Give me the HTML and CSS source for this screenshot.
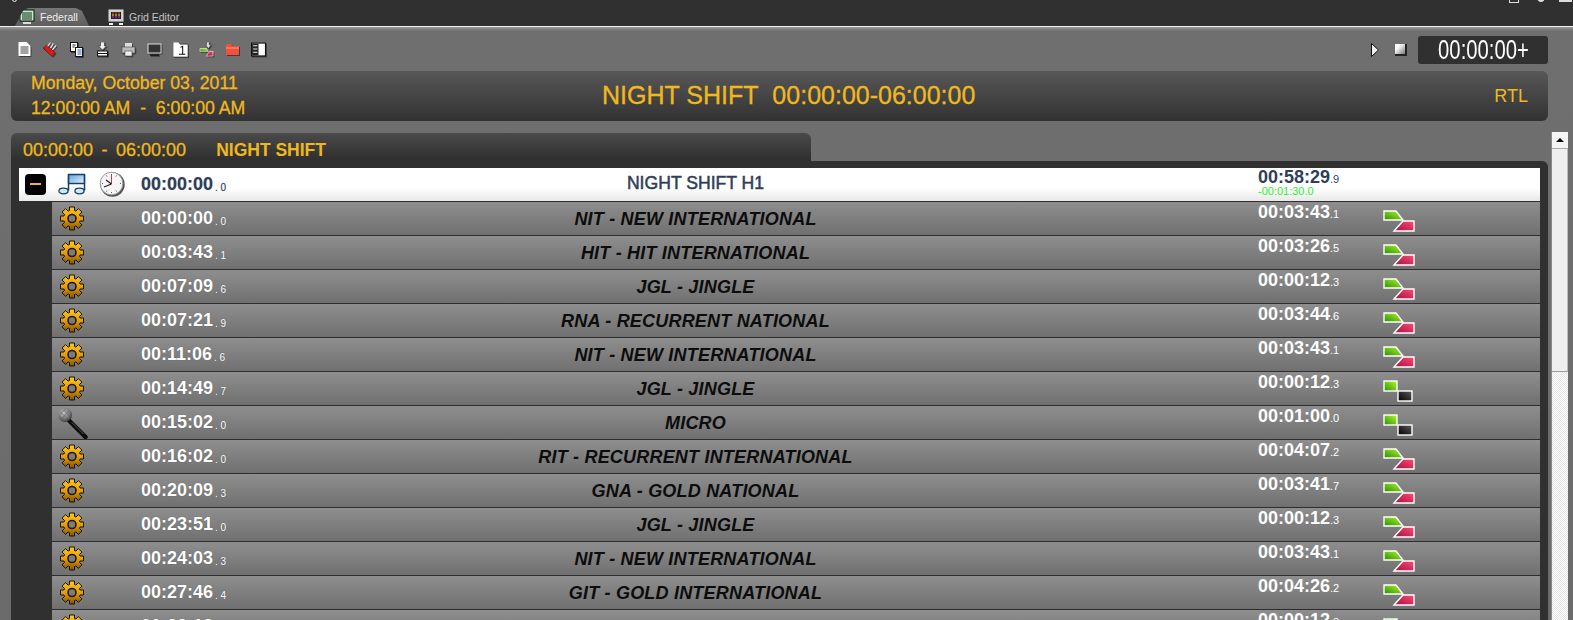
FILE: index.html
```html
<!DOCTYPE html>
<html lang="en">
<head>
  <meta charset="UTF-8" />
  <title>Federall</title>
  <link rel="stylesheet" href="styles.css">
</head>
<body>

  <svg class="defs" width="0" height="0" aria-hidden="true">
    <defs>
      <linearGradient id="gold" x1="0" y1="0" x2="0" y2="1">
        <stop offset="0" stop-color="#ffc71e"/>
        <stop offset="0.55" stop-color="#e39a08"/>
        <stop offset="1" stop-color="#7d5200"/>
      </linearGradient>
      <linearGradient id="green" x1="0" y1="1" x2="1" y2="0">
        <stop offset="0" stop-color="#2f8a0c"/>
        <stop offset="1" stop-color="#b0ff24"/>
      </linearGradient>
      <linearGradient id="red" x1="0" y1="1" x2="1" y2="0">
        <stop offset="0" stop-color="#a50e3c"/>
        <stop offset="1" stop-color="#ff4a78"/>
      </linearGradient>
      <linearGradient id="black" x1="0" y1="1" x2="1" y2="0">
        <stop offset="0" stop-color="#000"/>
        <stop offset="1" stop-color="#5a5a5a"/>
      </linearGradient>
      <linearGradient id="note" x1="0" y1="0" x2="1" y2="1">
        <stop offset="0" stop-color="#5ea4d8"/>
        <stop offset="1" stop-color="#e8f4fc"/>
      </linearGradient>
      <radialGradient id="mic-head" cx="0.4" cy="0.35" r="0.7">
        <stop offset="0" stop-color="#c8c8c8"/>
        <stop offset="0.6" stop-color="#7c7c7c"/>
        <stop offset="1" stop-color="#2e2e2e"/>
      </radialGradient>
      <symbol id="gear" viewBox="0 0 24 24">
        <path d="M9.5 4V.5h5V4L15.9 4.6 18.4 2.100 21.900 5.600 19.400 8.100 20 9.500h3.500v5H20L19.400 15.900 21.900 18.400 18.400 21.900 15.900 19.400 14.500 20v3.500h-5V20L8.100 19.400 5.600 21.900 2.100 18.400 4.600 15.900 4 14.500H.5v-5H4L4.600 8.100 2.100 5.600 5.600 2.100 8.100 4.600z" fill="url(#gold)" stroke="#1c1400" stroke-width="1"/>
        <circle cx="12" cy="12" r="4" fill="#7c7c7c" stroke="#241800" stroke-width="1.600"/>
      </symbol>
      <symbol id="flag-red" viewBox="0 0 32 22">
        <path d="M1 1h12l7 9H1z" fill="url(#green)" stroke="#fff" stroke-width="1.400"/>
        <path d="M11 21l9-10h11v10z" fill="url(#red)" stroke="#fff" stroke-width="1.400"/>
      </symbol>
      <symbol id="flag-black" viewBox="0 0 32 22">
        <rect x="1" y="1" width="13" height="10" fill="url(#green)" stroke="#fff" stroke-width="1.400"/>
        <rect x="15" y="11" width="14" height="10" fill="url(#black)" stroke="#fff" stroke-width="1.400"/>
      </symbol>
    </defs>
  </svg>

  <!-- Barra de pestanas -->
  <header class="top-bar">
    <span class="app-mark"></span>
    <div class="tab tab-active">
      <svg class="tab-icon" viewBox="0 0 16 16"><rect x="1" y="1" width="14" height="11" fill="#b6f0c4" stroke="#111"/><path d="M3 4h10M3 6h10M3 8h10M3 10h10" stroke="#222"/><path d="M4 14h8" stroke="#ddd" stroke-width="2"/></svg>
      <span>Federall</span>
    </div>
    <div class="tab">
      <svg class="tab-icon" viewBox="0 0 16 16"><rect x="1" y="1" width="14" height="11" fill="#ccc" stroke="#ddd"/><rect x="3" y="3" width="10" height="7" fill="#222"/><path d="M4 4h2M7 4h2M10 4h2" stroke="#e33"/><path d="M4 6h2M7 6h2M10 6h2" stroke="#ee3"/><path d="M4 8h2M7 8h2M10 8h2" stroke="#c3e"/><path d="M1 15h4M11 15h4" stroke="#eee" stroke-width="2"/></svg>
      <span>Grid Editor</span>
    </div>
    <div class="win-controls">
      <span class="win-box"></span>
      <span class="win-drop"></span>
      <span class="win-line"></span>
    </div>
  </header>

  <main class="workspace">

    <div class="toolbar">
      <div class="tools">
        <svg viewBox="0 0 14 15"><path d="M1 0h8l4 4v10H1z" fill="#fff"/><path d="M3 5h8M3 7h8M3 9h8M3 11h8" stroke="#444"/></svg>
        <svg viewBox="0 0 16 15"><path d="M0 6l4-3 9 8-3 4z" fill="#e01818" stroke="#400" stroke-width=".5"/><path d="M5 4l3-4M8 6l3-5M10 8l4-5" stroke="#eee" stroke-width="1.200"/></svg>
        <svg viewBox="0 0 14 15"><rect x="1" y="0.500" width="7" height="9" fill="#fff" stroke="#111"/><rect x="6" y="5.500" width="7" height="9" fill="#fff" stroke="#111"/><path d="M8 8h4M8 10h4M8 12h4" stroke="#35c"/><path d="M3 3h3M3 5h2" stroke="#111"/></svg>
        <svg viewBox="0 0 12 15"><path d="M4 0h4v4h2l-4 4-4-4h2z" fill="#eee" stroke="#222" stroke-width=".5"/><rect x="1" y="9" width="10" height="5" fill="#fff" stroke="#111"/><path d="M1 11.500h10" stroke="#111"/></svg>
        <svg viewBox="0 0 15 15"><rect x="4" y="1" width="7" height="4" fill="#ddd"/><rect x="1" y="5" width="13" height="6" fill="#bbb" stroke="#444" stroke-width=".6"/><rect x="4" y="9" width="7" height="5" fill="#eee" stroke="#444" stroke-width=".6"/></svg>
        <svg viewBox="0 0 15 13"><rect x="1" y="1" width="13" height="9" fill="#333" stroke="#ddd"/><path d="M3 12h9" stroke="#111" stroke-width="1.500"/></svg>
        <svg viewBox="0 0 14 14"><path d="M0 0h5l2 2h7v12H0z" fill="#fff" stroke="#111" stroke-width=".5"/><path d="M7 5l2-1v7M5.500 11.500h6" stroke="#111" fill="none"/></svg>
        <svg viewBox="0 0 16 16"><path d="M8 0h3v3h2l-3 4-3-4h1z" fill="#ddd" stroke="#222" stroke-width=".5"/><path d="M1 7h7l2 3H1z" fill="url(#green)" stroke="#fff" stroke-width=".6"/><path d="M8 15l3-5h4v5z" fill="url(#red)" stroke="#fff" stroke-width=".6"/></svg>
        <svg viewBox="0 0 15 13"><path d="M1 1h5l1 2h7v9H1z" fill="#f0503c"/><path d="M1 5h13" stroke="#ff9a80"/></svg>
        <svg viewBox="0 0 14 13"><rect x="0.500" y="0.500" width="13" height="12" fill="#fff" stroke="#111"/><rect x="1" y="1" width="6" height="11" fill="#222"/><path d="M2 3h4M2 6h4M2 9h4" stroke="#eee"/></svg>
      </div>
      <div class="transport">
        <svg class="play" viewBox="0 0 8 14"><path d="M.5.500L7.500 7 .5 13.500z" fill="#eee" stroke="#111"/></svg>
        <span class="stop"></span>
        <div class="counter"><span>00:00:00+</span></div>
      </div>
    </div>

    <section class="day-panel">
      <div class="day-date">
        <div>Monday, October 03, 2011</div>
        <div>12:00:00 AM &nbsp;-&nbsp; 6:00:00 AM</div>
      </div>
      <div class="day-title">NIGHT SHIFT&nbsp; 00:00:00-06:00:00</div>
      <div class="day-station">RTL</div>
    </section>

    <div class="log-wrap">
      <section class="log">
        <div class="shift-tab">
          <span class="shift-time">00:00:00 - 06:00:00</span>
          <span class="shift-name">NIGHT SHIFT</span>
        </div>
        <div class="shift-frame">

          <div class="row row-hour">
            <div class="cell-icons">
              <span class="collapse"></span>
              <svg class="note" viewBox="0 0 28 22"><path d="M10.500 1.500h16v9h-16z" fill="url(#note)" stroke="#14406c" stroke-width="1.300"/><path d="M10.500 1.500v16M26.500 1.500v16" stroke="#14406c" stroke-width="1.500"/><ellipse cx="5.500" cy="18" rx="4.600" ry="2.800" fill="#cfe6f5" stroke="#14406c" stroke-width="1.300"/><ellipse cx="21.500" cy="18" rx="4.600" ry="2.800" fill="#cfe6f5" stroke="#14406c" stroke-width="1.300"/></svg>
              <svg class="clock" viewBox="0 0 26 26"><circle cx="13.500" cy="13.500" r="12.200" fill="#555"/><circle cx="12.500" cy="12.500" r="11.300" fill="#f6f6f6" stroke="#999"/><path d="M12.500 13V4" stroke="#d33" stroke-width="1"/><path d="M12.500 13L5 16M12.500 13L7 9" stroke="#222" stroke-width="1.300"/><path d="M12.500 3v1M12.500 21v1M3 12.500h1M21 12.500h1M7.500 4.500l.5 1M17.500 4.500l-.5 1M7.500 20.500l.5-1M17.500 20.500l-.5-1" stroke="#555"/></svg>
            </div>
            <div class="cell-start">00:00:00<small>. 0</small></div>
            <div class="cell-name">NIGHT SHIFT H1</div>
            <div class="cell-length">00:58:29<small>.9</small><em>-00:01:30.0</em></div>
          </div>

          <div class="row"><div class="cell-icons"><svg class="gear"><use href="#gear"/></svg></div><div class="cell-start">00:00:00<small>. 0</small></div><div class="cell-name">NIT - NEW INTERNATIONAL</div><div class="cell-length">00:03:43<small>.1</small></div><svg class="flag"><use href="#flag-red"/></svg></div>
          <div class="row"><div class="cell-icons"><svg class="gear"><use href="#gear"/></svg></div><div class="cell-start">00:03:43<small>. 1</small></div><div class="cell-name">HIT - HIT INTERNATIONAL</div><div class="cell-length">00:03:26<small>.5</small></div><svg class="flag"><use href="#flag-red"/></svg></div>
          <div class="row"><div class="cell-icons"><svg class="gear"><use href="#gear"/></svg></div><div class="cell-start">00:07:09<small>. 6</small></div><div class="cell-name">JGL - JINGLE</div><div class="cell-length">00:00:12<small>.3</small></div><svg class="flag"><use href="#flag-red"/></svg></div>
          <div class="row"><div class="cell-icons"><svg class="gear"><use href="#gear"/></svg></div><div class="cell-start">00:07:21<small>. 9</small></div><div class="cell-name">RNA - RECURRENT NATIONAL</div><div class="cell-length">00:03:44<small>.6</small></div><svg class="flag"><use href="#flag-red"/></svg></div>
          <div class="row"><div class="cell-icons"><svg class="gear"><use href="#gear"/></svg></div><div class="cell-start">00:11:06<small>. 6</small></div><div class="cell-name">NIT - NEW INTERNATIONAL</div><div class="cell-length">00:03:43<small>.1</small></div><svg class="flag"><use href="#flag-red"/></svg></div>
          <div class="row"><div class="cell-icons"><svg class="gear"><use href="#gear"/></svg></div><div class="cell-start">00:14:49<small>. 7</small></div><div class="cell-name">JGL - JINGLE</div><div class="cell-length">00:00:12<small>.3</small></div><svg class="flag"><use href="#flag-black"/></svg></div>
          <div class="row"><div class="cell-icons"><svg class="mic" viewBox="0 0 32 32"><path d="M12 13L29 30" stroke="#0c0c0c" stroke-width="4.500" stroke-linecap="round"/><path d="M15 15L27 27" stroke="#555" stroke-width="1"/><circle cx="8.500" cy="8" r="7" fill="url(#mic-head)"/><path d="M4 5l8 8M7 3l7 7M3 9l6 5M5 12l7-8M3 8l6-6" stroke="#555" stroke-width=".6"/></svg></div><div class="cell-start">00:15:02<small>. 0</small></div><div class="cell-name">MICRO</div><div class="cell-length">00:01:00<small>.0</small></div><svg class="flag"><use href="#flag-black"/></svg></div>
          <div class="row"><div class="cell-icons"><svg class="gear"><use href="#gear"/></svg></div><div class="cell-start">00:16:02<small>. 0</small></div><div class="cell-name">RIT - RECURRENT INTERNATIONAL</div><div class="cell-length">00:04:07<small>.2</small></div><svg class="flag"><use href="#flag-red"/></svg></div>
          <div class="row"><div class="cell-icons"><svg class="gear"><use href="#gear"/></svg></div><div class="cell-start">00:20:09<small>. 3</small></div><div class="cell-name">GNA - GOLD NATIONAL</div><div class="cell-length">00:03:41<small>.7</small></div><svg class="flag"><use href="#flag-red"/></svg></div>
          <div class="row"><div class="cell-icons"><svg class="gear"><use href="#gear"/></svg></div><div class="cell-start">00:23:51<small>. 0</small></div><div class="cell-name">JGL - JINGLE</div><div class="cell-length">00:00:12<small>.3</small></div><svg class="flag"><use href="#flag-red"/></svg></div>
          <div class="row"><div class="cell-icons"><svg class="gear"><use href="#gear"/></svg></div><div class="cell-start">00:24:03<small>. 3</small></div><div class="cell-name">NIT - NEW INTERNATIONAL</div><div class="cell-length">00:03:43<small>.1</small></div><svg class="flag"><use href="#flag-red"/></svg></div>
          <div class="row"><div class="cell-icons"><svg class="gear"><use href="#gear"/></svg></div><div class="cell-start">00:27:46<small>. 4</small></div><div class="cell-name">GIT - GOLD INTERNATIONAL</div><div class="cell-length">00:04:26<small>.2</small></div><svg class="flag"><use href="#flag-red"/></svg></div>
          <div class="row"><div class="cell-icons"><svg class="gear"><use href="#gear"/></svg></div><div class="cell-start">00:32:12<small>. 6</small></div><div class="cell-length cell-last">00:00:12<small>.3</small></div><svg class="flag"><use href="#flag-black"/></svg></div>

        </div>
      </section>

      <div class="scrollbar">
        <div class="scroll-btn"></div>
        <div class="scroll-thumb"></div>
      </div>
    </div>

  </main>

</body>
</html>
```

FILE: styles.css
```css
* {
  box-sizing: border-box;
}
html, body {
  height: 620px;
  overflow: hidden;
}
body {
  margin: 0;
  font-family: "Liberation Sans", Arial, sans-serif;
  background: #6e6e6e;
  color: #fff;
}
.defs {
  position: absolute;
}

/* Barra superior */
.top-bar {
  height: 26px;
  background: #303030;
  display: flex;
  align-items: flex-end;
  padding-left: 15px;
  position: relative;
  overflow: hidden;
}
.app-mark {
  position: absolute;
  left: 12px;
  top: -3px;
  width: 5px;
  height: 5px;
  border: 1px solid #eee;
  border-radius: 50%;
}
.tab {
  height: 18px;
  display: flex;
  align-items: center;
  gap: 5px;
  padding: 0 14px 0 4px;
  font-size: 10.500px;
  color: #c4c4c4;
  margin-right: 14px;
}
.tab-active {
  width: 74px;
  background: linear-gradient(#767676, #5e5e5e);
  clip-path: polygon(0 100%, 8px 3px, 13px 0, calc(100% - 13px) 0, calc(100% - 7px) 3px, 100% 100%);
  color: #eee;
  padding: 0 0 0 4px;
  margin-right: 15px;
}
.tab-icon {
  width: 16px;
  height: 16px;
}
.win-controls {
  position: absolute;
  top: -7px;
  right: 1px;
  display: flex;
  align-items: flex-start;
}
.win-box {
  width: 10px;
  height: 10px;
  border: 1px solid #ddd;
  margin-right: 18px;
}
.win-drop {
  width: 8px;
  height: 9px;
  background: #ddd;
  border-radius: 50%;
  margin-right: 14px;
}
.win-line {
  width: 13px;
  height: 9px;
  border-bottom: 2px solid #ddd;
}

/* Zona de trabajo */
.workspace {
  height: 594px;
  border-top: 1px solid #f0f0f0;
  background: linear-gradient(#9a9a9a 0, #6f6f6f 4px, #6b6b6b 100%);
  padding: 9px 5px 0 11px;
}
.toolbar {
  height: 35px;
  display: flex;
  justify-content: space-between;
  align-items: flex-start;
  padding-right: 20px;
}
.tools {
  display: flex;
  align-items: center;
  gap: 11px;
  padding: 6px 0 0 6px;
}
.tools svg {
  width: 15px;
  height: 15px;
  filter: drop-shadow(1px 1px 0 rgba(0,0,0,0.45));
}
.transport {
  display: flex;
  align-items: center;
}
.play {
  width: 8px;
  height: 14px;
  margin-right: 16px;
}
.stop {
  width: 12px;
  height: 12px;
  background: linear-gradient(135deg, #fff 30%, #777);
  border-right: 2px solid #222;
  border-bottom: 2px solid #222;
  margin-right: 11px;
}
.counter {
  width: 130px;
  height: 28px;
  background: #303030;
  border-radius: 3px;
  font-size: 27px;
  line-height: 28px;
  text-align: center;
  white-space: nowrap;
}
.counter span {
  display: inline-block;
  transform: scaleX(0.75);
}

/* Panel del dia */
.day-panel {
  height: 50px;
  width: 1537px;
  border-radius: 6px;
  background: linear-gradient(#575757, #323232);
  color: #f0b81e;
  display: flex;
  align-items: center;
}
.day-date {
  padding-left: 20px;
  width: 591px;
  font-size: 17.700px;
  line-height: 25px;
  white-space: nowrap;
  -webkit-text-stroke: 0.3px #f0b81e;
}
.day-title {
  font-size: 25px;
  white-space: nowrap;
  margin-top: -2px;
  -webkit-text-stroke: 0.3px #f0b81e;
}
.day-station {
  font-size: 18px;
  margin-left: auto;
  padding-right: 20px;
}

/* Registro */
.log-wrap {
  display: flex;
  align-items: flex-start;
  margin-top: 12px;
}
.log {
  width: 1537px;
  flex: none;
}
.shift-tab {
  width: 800px;
  height: 28px;
  background: linear-gradient(#4a4a4a, #2e2e2e);
  border-radius: 6px 6px 0 0;
  color: #f0b81e;
  line-height: 34px;
  padding-left: 12px;
  display: flex;
  gap: 30px;
}
.shift-time {
  font-size: 18px;
  word-spacing: 3.500px;
  -webkit-text-stroke: 0.3px #f0b81e;
}
.shift-name {
  font-size: 17.500px;
  font-weight: bold;
}
.shift-frame {
  background: #303030;
  padding: 7px 8px 0;
  border-radius: 0 6px 0 0;
  height: 500px;
}

.row {
  height: 34px;
  margin-left: 33px;
  background: linear-gradient(#8e8e8e, #707070);
  border-bottom: 1px solid #2e2e2e;
  display: flex;
  align-items: flex-start;
  position: relative;
}
.row-hour {
  margin-left: 0;
  background: linear-gradient(#fff 60%, #e8e8e8);
  color: #2f3e5a;
}
.cell-icons {
  width: 89px;
  flex: none;
  display: flex;
  align-items: center;
  height: 32px;
  padding-left: 8px;
}
.row-hour .cell-icons {
  width: 122px;
  padding-left: 6px;
}
.gear {
  width: 24px;
  height: 25px;
}
.mic {
  width: 33px;
  height: 32px;
  margin: 2px 0 0 -4px;
}
.collapse {
  width: 21px;
  height: 21px;
  background: #000;
  border-radius: 4px;
  position: relative;
  margin-right: 12px;
}
.collapse::after {
  content: "";
  position: absolute;
  left: 5px;
  right: 5px;
  top: 9px;
  height: 2px;
  background: #f0b81e;
}
.note {
  width: 28px;
  height: 22px;
  margin-right: 13px;
}
.clock {
  width: 26px;
  height: 26px;
}
.cell-start {
  width: 1117px;
  flex: none;
  font-size: 18px;
  font-weight: bold;
  line-height: 32px;
  white-space: nowrap;
  text-shadow: 0 0 1px rgba(0,0,0,0.3);
}
.cell-start small {
  font-size: 10px;
  font-weight: normal;
  margin-left: 2px;
  position: relative;
  top: 1px;
}
.cell-name {
  position: absolute;
  left: 0;
  right: 0;
  top: 0;
  text-align: center;
  font-size: 18px;
  font-weight: bold;
  font-style: italic;
  letter-spacing: 0.2px;
  line-height: 34px;
  color: #0c0c0c;
  padding-right: 201px;
  white-space: nowrap;
  pointer-events: none;
}
.row-hour .cell-name {
  font-size: 17.600px;
  font-weight: normal;
  font-style: normal;
  letter-spacing: 0;
  -webkit-text-stroke: 0.5px #2f3e5a;
  color: #2f3e5a;
  padding-right: 168px;
  line-height: 31px;
}
.cell-length {
  font-size: 18px;
  font-weight: bold;
  line-height: 18px;
  padding-top: 1px;
  white-space: nowrap;
  position: relative;
  z-index: 1;
  width: 125px;
  flex: none;
  color: #fff;
}
.cell-length small {
  font-size: 11px;
  font-weight: normal;
}
.row-hour .cell-length {
  color: #2f3e5a;
  padding-top: 2px;
  line-height: 15px;
}
.cell-length em {
  display: block;
  font-style: normal;
  font-weight: normal;
  font-size: 11px;
  line-height: 8px;
  color: #2eee2e;
}
.flag {
  width: 32px;
  height: 22px;
  margin-top: 8px;
}

/* Barra de desplazamiento */
.scrollbar {
  width: 17px;
  margin: -1px 0 0 3px;
  flex: none;
  height: 500px;
  background: repeating-conic-gradient(#fff 0 25%, #e4e4e4 0 50%) 0 0 / 2px 2px;
  display: flex;
  flex-direction: column;
  border-left: 1px solid #8a8a8a;
}
.scroll-btn {
  height: 17px;
  background: #f4f4f4;
  border-bottom: 1px solid #aaa;
  display: flex;
  align-items: center;
  justify-content: center;
}
.scroll-btn::before {
  content: "";
  border-left: 4px solid transparent;
  border-right: 4px solid transparent;
  border-bottom: 4px solid #000;
}
.scroll-thumb {
  height: 223px;
  background: #efefef;
  border-bottom: 1px solid #999;
  border-right: 1px solid #bbb;
}
```
